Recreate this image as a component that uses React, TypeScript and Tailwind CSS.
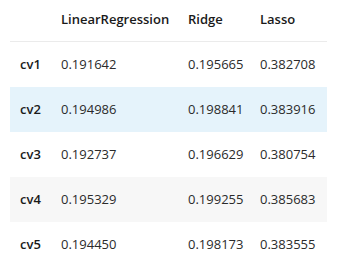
const rows = [
  { name: "cv1", lr: "0.191642", ridge: "0.195665", lasso: "0.382708", bg: "bg-white" },
  { name: "cv2", lr: "0.194986", ridge: "0.198841", lasso: "0.383916", bg: "bg-[#e5f3fb]" },
  { name: "cv3", lr: "0.192737", ridge: "0.196629", lasso: "0.380754", bg: "bg-white" },
  { name: "cv4", lr: "0.195329", ridge: "0.199255", lasso: "0.385683", bg: "bg-[#f7f7f7]" },
  { name: "cv5", lr: "0.194450", ridge: "0.198173", lasso: "0.383555", bg: "bg-white" },
];

export default function App() {
  return (
    <div className="w-[340px] h-[273px] bg-white font-['Open_Sans',sans-serif] text-[13px] overflow-hidden">
      <div className="ml-[10px] w-[317px]">
        <div className="grid grid-cols-[42px_128px_72px_75px] h-[42px] pb-[2px] items-center border-b border-[#ebebeb] font-semibold text-[#1a1a1a]">
          <div />
          <div className="pl-[9px]">LinearRegression</div>
          <div className="pl-[8px]">Ridge</div>
          <div className="pl-[8px]">Lasso</div>
        </div>
        {rows.map((r) => (
          <div
            key={r.name}
            className={`grid grid-cols-[42px_128px_72px_75px] h-[45px] items-center ${r.bg}`}
          >
            <div className="pl-[10px] font-semibold text-[#1a1a1a]">{r.name}</div>
            <div className="pl-[9px] text-[#2b2b2b]">{r.lr}</div>
            <div className="pl-[8px] text-[#2b2b2b]">{r.ridge}</div>
            <div className="pl-[8px] text-[#2b2b2b]">{r.lasso}</div>
          </div>
        ))}
      </div>
    </div>
  );
}
